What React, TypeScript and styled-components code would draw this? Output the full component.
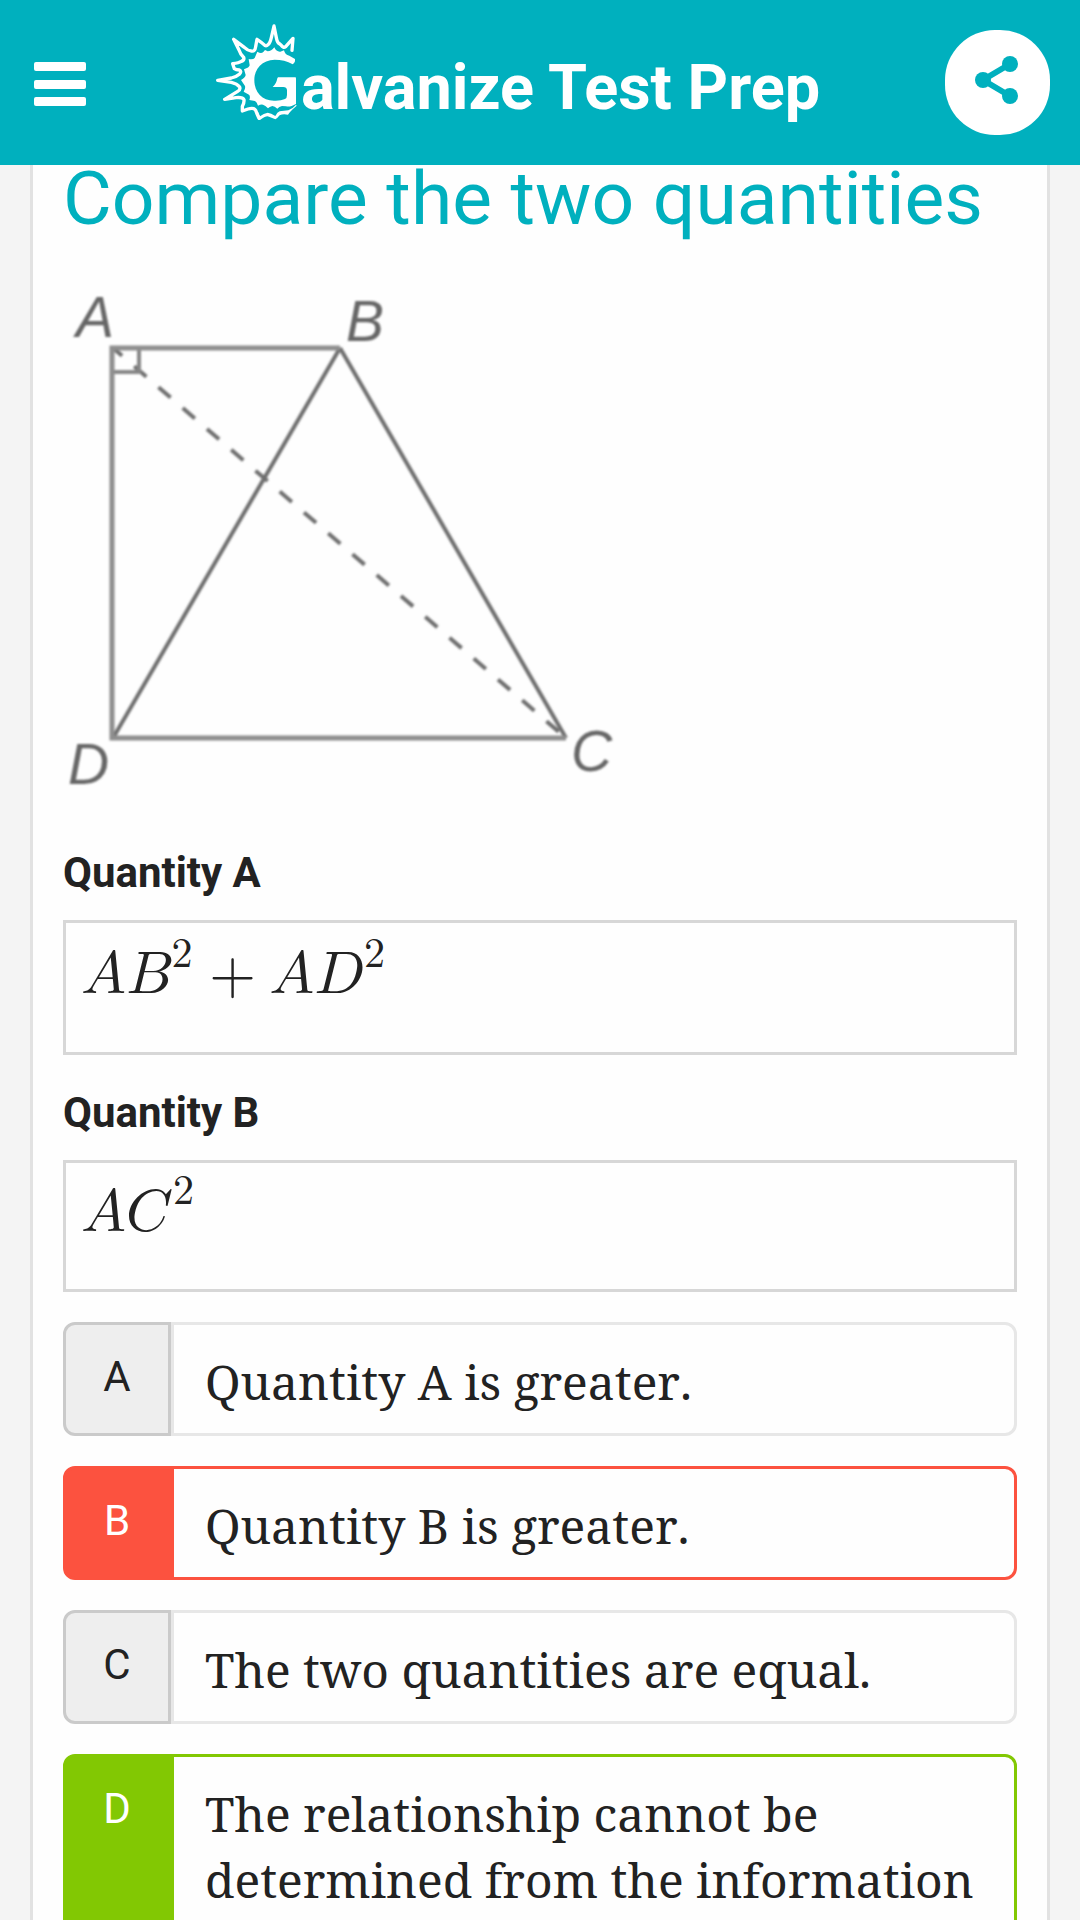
import React from "react";
import styled, { createGlobalStyle, css } from "styled-components";

const teal = "#00b0be";
const ink = "#222222";

const GlobalStyle = createGlobalStyle`
  *, *::before, *::after { box-sizing: border-box; }
  body {
    margin: 0;
    background: #f4f4f4;
    color: ${ink};
    font-family: Roboto, "Liberation Sans", sans-serif;
  }
`;

const Screen = styled.div`
  display: flex;
  flex-direction: column;
  height: 100vh;
  overflow: hidden;
`;

const TopBar = styled.header`
  display: flex;
  flex: none;
  align-items: center;
  justify-content: space-between;
  height: 165px;
  padding: 0 30px 0 34px;
  background: ${teal};
  color: #fff;
`;

const MenuButton = styled.button`
  display: flex;
  padding: 3px 0 0;
  border: 0;
  background: none;
  color: inherit;
`;

const Brand = styled.a`
  display: flex;
  align-items: center;
  gap: 4px;
  margin-left: 4px;
  color: inherit;
  text-decoration: none;
`;

const LogoMark = styled.svg`
  width: 82px;
  height: 98px;
  margin-bottom: 21px;
`;

const BrandName = styled.span`
  padding-top: 10px;
  font-size: 63px;
  font-weight: 700;
  line-height: 72px;
  white-space: nowrap;
`;

const ShareButton = styled.button`
  display: flex;
  align-items: center;
  justify-content: center;
  width: 105px;
  height: 105px;
  padding: 0 0 5px;
  border: 0;
  border-radius: 50px;
  background: #fff;
  color: ${teal};
`;

const Card = styled.main`
  flex: 1;
  margin: 0 30px;
  padding: 0 30px;
  border: solid #e2e2e2;
  border-width: 0 3px;
  background: #fefefe;
`;

const Title = styled.h1`
  margin: 0 0 54px;
  color: ${teal};
  font-size: 75px;
  font-weight: 400;
  line-height: 66px;
`;

const Figure = styled.svg`
  display: block;
  width: 560px;
  height: 516px;
  margin-bottom: 42px;
`;

const QuantityLabel = styled.h2`
  margin: 0 0 17px;
  font-size: 42px;
  font-weight: 700;
  line-height: 60px;
`;

const FormulaBox = styled.div<{ $compact?: boolean }>`
  min-height: ${(p) => (p.$compact ? 132 : 135)}px;
  margin-bottom: ${(p) => (p.$compact ? 30 : 28)}px;
  padding: ${(p) => (p.$compact ? 13 : 16)}px 15px 0;
  border: 3px solid #d7d7d7;
  font-size: 60px;
  line-height: 60px;

  math {
    display: block math;
    width: fit-content;
    font-family: "Latin Modern Math", "Liberation Serif", math, serif;
  }

  mn {
    padding-left: ${(p) => (p.$compact ? 4 : 0)}px;
  }
`;

const Options = styled.div`
  display: flex;
  flex-direction: column;
  gap: 30px;
`;

type Mark = "none" | "wrong" | "right";

const Badge = styled.span`
  flex: none;
  width: 108px;
  padding-top: 25px;
  border: 3px solid #cacaca;
  border-radius: 12px 0 0 12px;
  background: #eeeeee;
  font-size: 42px;
  line-height: 54px;
  text-align: center;
`;

const OptionText = styled.span`
  flex: 1;
  padding: 24px 31px 18px;
  border: 3px solid #e7e7e7;
  border-radius: 0 12px 12px 0;
  font-family: "Noto Serif", "Droid Serif", "DejaVu Serif Condensed", "Liberation Serif", serif;
  font-kerning: none;
  font-size: 48px;
  line-height: 66px;
`;

const marked = (colour: string) => css`
  ${Badge} {
    border-color: ${colour};
    background: ${colour};
    color: #fff;
  }
  ${OptionText} {
    border-color: ${colour};
  }
`;

const Option = styled.button<{ $mark: Mark }>`
  display: flex;
  width: 100%;
  padding: 0;
  border: 0;
  background: none;
  color: inherit;
  font-family: inherit;
  text-align: left;
  ${(p) => p.$mark === "wrong" && marked("#fc523f")}
  ${(p) => p.$mark === "right" && marked("#82c803")}
`;

const options: { letter: string; text: string; mark: Mark }[] = [
  { letter: "A", text: "Quantity A is greater.", mark: "none" },
  { letter: "B", text: "Quantity B is greater.", mark: "wrong" },
  { letter: "C", text: "The two quantities are equal.", mark: "none" },
  {
    letter: "D",
    text: "The relationship cannot be determined from the information",
    mark: "right",
  },
];

const Logo = () => (
  <LogoMark viewBox="45 40 246 294" aria-hidden="true">
    <path
      fill="none"
      stroke="#fff"
      strokeWidth="10"
      strokeLinejoin="round"
      strokeLinecap="round"
      d="M276 122 L279 86 L257 111 Q250 116 243 106 L238 102 Q232 100 229 84 L222 49 L214 84 Q210 101 204 105 Q198 112 192 105 Q186 99 171 89 L167 111 Q165 127 154 124 Q143 123 133 113 L101 89 L117 121 Q122 136 131 143 Q134 151 124 155 Q117 159 98 162 L103 177 Q108 181 118 181 Q126 185 119 193 Q110 201 94 205 L53 212 L94 218 Q111 222 119 232 Q122 240 113 245 L74 269 L108 264 Q128 262 132 270 Q133 280 127 290 L127 304 L144 298 Q162 293 167 302 Q171 314 177 326"
    />
    <path
      fill="#fff"
      d="M173 325 Q176 334 183 329 Q199 317 207 321 L226 329 Q233 325 239 317 Q249 311 264 315 Q269 306 290 288 L288 285 Q277 298 265 302 Q251 304 239 305 Q232 307 226 319 Q213 310 203 309 Q191 311 180 320 L173 304 Z"
    />
    <path
      fill="#fff"
      d="M285 148 L285 155 Q282 163 278 164 C262 154 243 150 224 150 C187 151 163 177 163 211 C163 248 187 273 222 273 Q242 274 255 268 Q261 265 261 256 L261 241 Q260 232 250 232 L218 232 Q229 223 232 206 L234 203 L286 203 Q288 203 288 207 L288 283 L275 289 Q266 292 258 290 L246 289 Q237 291 232 297 Q224 289 217 289 Q208 291 204 296 Q196 287 189 285 Q181 284 174 288 Q171 277 165 274 L148 271 Q152 260 147 255 L131 246 Q137 237 135 229 L123 211 Q136 204 137 196 L132 179 Q148 174 149 167 L146 148 Q160 150 164 145 L172 126 Q183 133 190 127 L195 121 L203 125 Q214 125 223 113 Q229 127 241 126 L252 122 Q255 136 268 138 Z"
    />
  </LogoMark>
);

const Trapezoid = () => (
  <Figure viewBox="63 285 560 516" role="img" aria-label="Quadrilateral ABCD with diagonals">
    <defs>
      <filter id="soften" x="-5%" y="-5%" width="110%" height="110%">
        <feGaussianBlur stdDeviation="1" />
      </filter>
    </defs>
    <g filter="url(#soften)">
      <g fill="none" stroke="#6e6e6e" strokeWidth="4">
        <path d="M340 348 L113 738" />
        <path d="M340 348 L566 738" />
        <path d="M113 348 L566 738" strokeDasharray="16 16" strokeDashoffset="4" />
        <path d="M139 348 V372 H113" stroke="#868686" />
      </g>
      <path d="M340 348 H112 V738 H566" fill="none" stroke="#8e8e8e" strokeWidth="5" />
      <g
        fill="#666666"
        fontFamily="'Liberation Sans', sans-serif"
        fontStyle="italic"
        fontSize="57"
      >
        <text x="76" y="337">A</text>
        <text x="346" y="341">B</text>
        <text x="68" y="784">D</text>
        <text x="571" y="771">C</text>
      </g>
    </g>
  </Figure>
);

const Squared = ({ name }: { name: string }) => (
  <msup>
    <mi>{name}</mi>
    <mn>2</mn>
  </msup>
);

export default function App() {
  return (
    <Screen>
      <GlobalStyle />
      <TopBar>
        <MenuButton type="button" aria-label="Menu">
          <svg width="52" height="44" viewBox="0 0 52 44" fill="currentColor">
            <rect width="52" height="9" rx="2" />
            <rect y="18" width="52" height="9" rx="2" />
            <rect y="35" width="52" height="9" rx="2" />
          </svg>
        </MenuButton>
        <Brand href="#">
          <Logo />
          <BrandName>alvanize Test Prep</BrandName>
        </Brand>
        <ShareButton type="button" aria-label="Share">
          <svg width="44" height="50" viewBox="0 0 44 50" fill="currentColor">
            <path d="M35 9 L8 25 L35 41" fill="none" stroke="currentColor" strokeWidth="6" />
            <circle cx="35" cy="9" r="8" />
            <circle cx="8" cy="25" r="8" />
            <circle cx="35" cy="41" r="8" />
          </svg>
        </ShareButton>
      </TopBar>
      <Card>
        <Title>Compare the two quantities</Title>
        <Trapezoid />
        <QuantityLabel>Quantity A</QuantityLabel>
        <FormulaBox>
          <math>
            <mi>A</mi>
            <Squared name="B" />
            <mo>+</mo>
            <mi>A</mi>
            <Squared name="D" />
          </math>
        </FormulaBox>
        <QuantityLabel>Quantity B</QuantityLabel>
        <FormulaBox $compact>
          <math>
            <mi>A</mi>
            <Squared name="C" />
          </math>
        </FormulaBox>
        <Options>
          {options.map((o) => (
            <Option key={o.letter} type="button" $mark={o.mark}>
              <Badge>{o.letter}</Badge>
              <OptionText>{o.text}</OptionText>
            </Option>
          ))}
        </Options>
      </Card>
    </Screen>
  );
}
